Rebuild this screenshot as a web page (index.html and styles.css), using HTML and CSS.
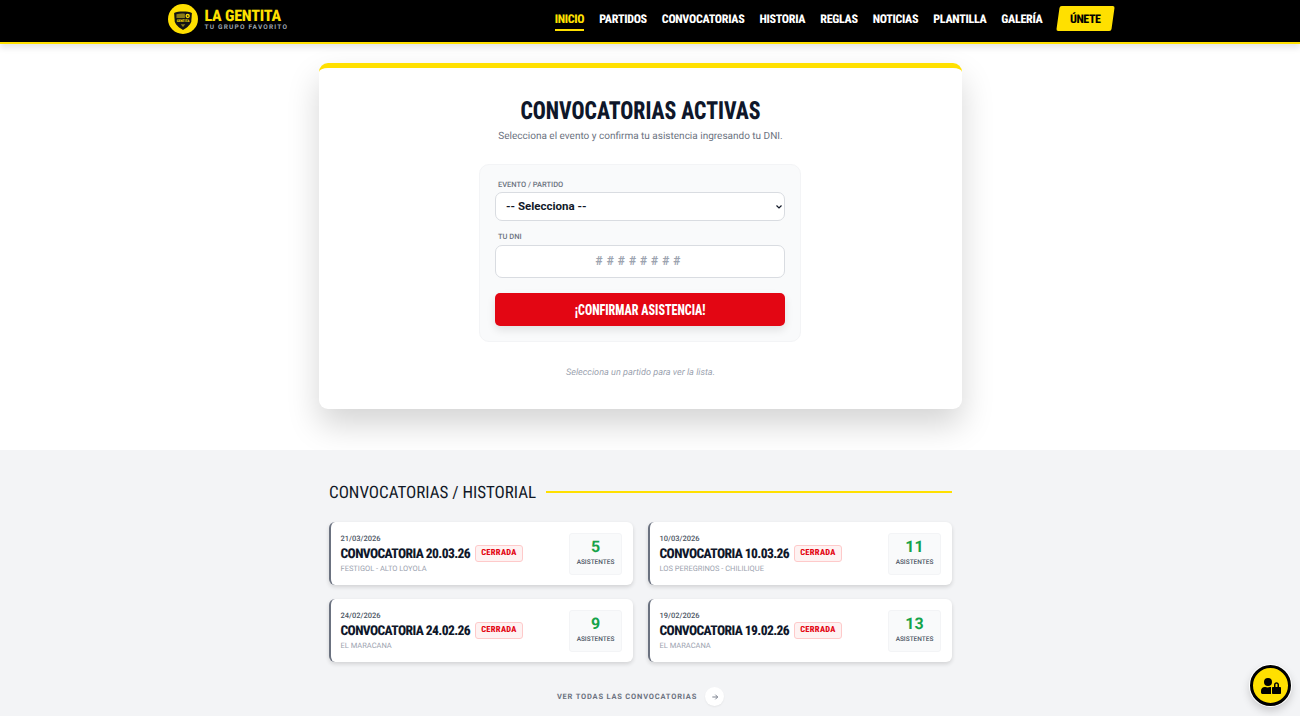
FILE: index.html
```html
<!DOCTYPE html>
<html lang="es">
<head>
    <meta charset="UTF-8">
    <meta name="viewport" content="width=device-width, initial-scale=1.0">
    <title>La Gentita</title>
    <link rel="stylesheet" href="styles.css">
</head>
<body>
    <header class="topbar">
        <div class="topbar-inner">
            <a class="brand" href="#">
                <svg class="brand-logo" viewBox="0 0 32 32" aria-hidden="true">
                    <circle cx="16" cy="16" r="16" fill="#ffe000"/>
                    <path d="M6.500 9.500 C11 7.500 21 7.500 25.500 9.500 L24.800 19 C23.500 23 19 26 16 27.800 C13 26 8.500 23 7.200 19 Z" fill="#141414"/>
                    <path d="M9 11 C12 10 15 10 18 10.300 V15 H9 Z" fill="#8a7c18"/>
                    <circle cx="21" cy="12.800" r="2.300" fill="#ffe000"/>
                    <circle cx="21" cy="12.800" r="0.900" fill="#141414"/>
                    <text class="logo-word" x="16" y="19.300" text-anchor="middle">GENTITA</text>
                    <path d="M13.500 21.500h5l-2.500 3z" fill="#8a7c18"/>
                </svg>
                <span class="brand-text">
                    <span class="brand-name">LA GENTITA</span>
                    <span class="brand-tag">TU GRUPO FAVORITO</span>
                </span>
            </a>
            <nav class="nav">
                <a class="nav-link active" href="#">INICIO</a>
                <a class="nav-link" href="#">PARTIDOS</a>
                <a class="nav-link" href="#">CONVOCATORIAS</a>
                <a class="nav-link" href="#">HISTORIA</a>
                <a class="nav-link" href="#">REGLAS</a>
                <a class="nav-link" href="#">NOTICIAS</a>
                <a class="nav-link" href="#">PLANTILLA</a>
                <a class="nav-link" href="#">GALERÍA</a>
                <a class="nav-cta" href="#"><span>ÚNETE</span></a>
            </nav>
        </div>
    </header>

    <section class="active-section">
        <div class="active-card">
            <h1>CONVOCATORIAS ACTIVAS</h1>
            <p class="lead">Selecciona el evento y confirma tu asistencia ingresando tu DNI.</p>

            <form class="rsvp-form">
                <label class="field-label" for="evento">EVENTO / PARTIDO</label>
                <select id="evento" class="field-select">
                    <option>-- Selecciona --</option>
                </select>
                <label class="field-label second" for="dni">TU DNI</label>
                <input id="dni" class="field-input" type="text" placeholder="########">
                <button class="confirm-btn" type="button"><span>¡CONFIRMAR ASISTENCIA!</span></button>
            </form>

            <p class="hint">Selecciona un partido para ver la lista.</p>
        </div>
    </section>

    <section class="history">
        <div class="history-inner">
            <div class="history-head">
                <h2>CONVOCATORIAS / HISTORIAL</h2>
                <span class="history-line"></span>
            </div>

            <div class="history-grid">
                <article class="event">
                    <div class="event-info">
                        <div class="event-date">21/03/2026</div>
                        <div class="event-title">
                            <h3>CONVOCATORIA 20.03.26</h3>
                            <span class="badge">CERRADA</span>
                        </div>
                        <div class="event-place">FESTIGOL - ALTO LOYOLA</div>
                    </div>
                    <div class="event-count"><b>5</b><span>ASISTENTES</span></div>
                </article>
                <article class="event">
                    <div class="event-info">
                        <div class="event-date">10/03/2026</div>
                        <div class="event-title">
                            <h3>CONVOCATORIA 10.03.26</h3>
                            <span class="badge">CERRADA</span>
                        </div>
                        <div class="event-place">LOS PEREGRINOS - CHILILIQUE</div>
                    </div>
                    <div class="event-count"><b>11</b><span>ASISTENTES</span></div>
                </article>
                <article class="event">
                    <div class="event-info">
                        <div class="event-date">24/02/2026</div>
                        <div class="event-title">
                            <h3>CONVOCATORIA 24.02.26</h3>
                            <span class="badge">CERRADA</span>
                        </div>
                        <div class="event-place">EL MARACANA</div>
                    </div>
                    <div class="event-count"><b>9</b><span>ASISTENTES</span></div>
                </article>
                <article class="event">
                    <div class="event-info">
                        <div class="event-date">19/02/2026</div>
                        <div class="event-title">
                            <h3>CONVOCATORIA 19.02.26</h3>
                            <span class="badge">CERRADA</span>
                        </div>
                        <div class="event-place">EL MARACANA</div>
                    </div>
                    <div class="event-count"><b>13</b><span>ASISTENTES</span></div>
                </article>
            </div>

            <a class="see-all" href="#">
                VER TODAS LAS CONVOCATORIAS
                <span class="see-all-arrow">
                    <svg viewBox="0 0 12 12" aria-hidden="true">
                        <path d="M2 6h8M6.500 2.500 10 6l-3.500 3.500" fill="none" stroke="currentColor" stroke-width="1.300"/>
                    </svg>
                </span>
            </a>
        </div>
    </section>

    <!-- acceso admin -->
    <a class="admin-fab" href="#">
        <svg viewBox="0 0 640 512" aria-hidden="true">
            <path d="M224 256a128 128 0 1 0 0-256 128 128 0 0 0 0 256zm96 64c0-10 1.500-20 4-29.500-7-1.500-14-2.500-21.500-2.500h-16.500c-22 10-47 16-74 16s-52-6-74-16h-16.500C54 288 0 342 0 408.500V464c0 26.500 21.500 48 48 48h277c-3-7-5-15-5-24V320z"/>
            <path d="M608 288h-32v-72c0-44-36-80-80-80s-80 36-80 80v72h-32c-17.700 0-32 14.300-32 32v160c0 17.700 14.300 32 32 32h224c17.700 0 32-14.300 32-32V320c0-17.700-14.300-32-32-32zm-144 0v-72c0-17.600 14.400-32 32-32s32 14.400 32 32v72h-64z"/>
        </svg>
    </a>
</body>
</html>
```

FILE: styles.css
```css
* {
    box-sizing: border-box;
}
html, body {
    height: 100%;
}
body {
    margin: 0;
    font-family: Roboto, "Liberation Sans", sans-serif;
    color: #111827;
    background-color: #fff;
    overflow: hidden;
    text-rendering: geometricPrecision;
}
a {
    text-decoration: none;
    color: inherit;
}
h1, h2, h3, p {
    margin: 0;
}

/* titulares estrechos */
.brand-name, .nav-link, .nav-cta, .active-card h1, .confirm-btn,
.history-head h2, .event-title h3, .badge {
    font-family: Roboto, "Liberation Sans", sans-serif;
    font-stretch: 75%;
}

/* barra superior */
.topbar {
    height: 44px;
    padding-right: 19px;
    background-color: #000;
    border-bottom: 2px solid #ffe000;
    box-shadow: 0 4px 6px rgba(0,0,0,0.1);
    position: relative;
}
.topbar-inner {
    width: 946px;
    height: 42px;
    margin: 0 auto;
    display: flex;
    align-items: center;
    justify-content: space-between;
}
.brand {
    display: flex;
    align-items: center;
    gap: 7px;
    padding-bottom: 4px;
}
.brand-logo {
    width: 30px;
    height: 30px;
}
.logo-word {
    font-family: Roboto, sans-serif;
    font-stretch: 75%;
    font-size: 3.8px;
    font-weight: 800;
    fill: #ffe000;
}
.brand-text {
    display: flex;
    flex-direction: column;
    margin-top: 1px;
}
.brand-name {
    font-weight: 800;
    font-size: 16px;
    line-height: 15px;
    letter-spacing: -0.2px;
    color: #ffe000;
}
.brand-tag {
    font-size: 6.5px;
    line-height: 8px;
    font-weight: 700;
    letter-spacing: 1.2px;
    color: #9ca3af;
}
.nav {
    display: flex;
    align-items: center;
    gap: 15px;
}
.nav-link {
    font-weight: 800;
    font-size: 12px;
    line-height: 14px;
    letter-spacing: -0.3px;
    color: #fff;
    padding-bottom: 3px;
    border-bottom: 2px solid transparent;
}
.nav-link.active {
    color: #ffe000;
    border-bottom-color: #ffe000;
}
.nav-cta {
    background-color: #ffe000;
    color: #000;
    width: 55px;
    height: 25px;
    margin-right: 1px;
    margin-bottom: 5px;
    border-radius: 2px;
    transform: skewX(-8deg);
    display: flex;
    align-items: center;
    justify-content: center;
    font-weight: 800;
    font-size: 12px;
    letter-spacing: -0.4px;
}
.nav-cta span {
    transform: skewX(8deg);
}

/* convocatorias activas */
.active-section {
    height: 406px;
    padding-top: 19px;
    padding-right: 19px;
}
.active-card {
    width: 643px;
    height: 346px;
    margin: 0 auto;
    padding-top: 30px;
    background-color: #fff;
    border-top: 5px solid #ffe000;
    border-radius: 9px;
    box-shadow: 0 16px 32px rgba(0,0,0,0.17);
    text-align: center;
}
.active-card h1 {
    font-weight: 800;
    font-size: 25px;
    line-height: 28px;
    transform: scaleX(0.865);
    color: #0f172a;
}
.lead {
    margin-top: 3px;
    font-size: 10px;
    line-height: 16px;
    color: #6b7280;
}
.rsvp-form {
    width: 322px;
    height: 178px;
    margin: 19px 161px 0 160px;
    padding: 15px 15px;
    background-color: #f9fafb;
    border: 1px solid #f3f4f6;
    border-radius: 10px;
    display: flex;
    flex-direction: column;
    text-align: left;
}
.field-label {
    font-size: 7.5px;
    line-height: 10px;
    font-weight: 500;
    color: #6b7280;
    padding-left: 3px;
    margin-bottom: 2px;
}
.field-label.second {
    margin-top: 11px;
    margin-bottom: 3px;
}
.field-select {
    appearance: none;
    height: 29px;
    width: 100%;
    padding: 0 10px 2px;
    background: #fff url("data:image/svg+xml,%3Csvg xmlns='http://www.w3.org/2000/svg' viewBox='0 0 6 4'%3E%3Cpath d='M.5.5 3 3 5.500.5' fill='none' stroke='%23111827' stroke-width='1.200'/%3E%3C/svg%3E") no-repeat right 2px center / 6px 4px;
    border: 1px solid #d9dce1;
    border-radius: 7px;
    font-family: Roboto, sans-serif;
    font-size: 11.5px;
    font-weight: 700;
    color: #111827;
}
.field-input {
    height: 33px;
    width: 100%;
    padding: 0 0 2px;
    background-color: #fff;
    border: 1px solid #d9dce1;
    border-radius: 7px;
    font-family: Roboto, sans-serif;
    font-size: 12px;
    font-weight: 700;
    letter-spacing: 4px;
    text-align: center;
}
.field-input::placeholder {
    color: #9ca3af;
}
.confirm-btn {
    height: 33px;
    margin-top: 15px;
    background-color: #e30613;
    color: #fff;
    border: none;
    border-radius: 5px;
    box-shadow: 0 4px 8px rgba(0,0,0,0.1);
    font-weight: 800;
    font-size: 14px;
}
.confirm-btn span {
    display: inline-block;
    transform: scaleX(0.86);
}
.hint {
    margin-top: 25px;
    font-size: 9.1px;
    line-height: 12px;
    font-style: italic;
    color: #9ca3af;
}

/* historial */
.history {
    height: 266px;
    background-color: #f3f4f6;
    padding-top: 30px;
    padding-right: 19px;
}
.history-inner {
    width: 623px;
    margin: 0 auto;
}
.history-head {
    display: flex;
    align-items: center;
    gap: 10px;
    padding-top: 1px;
}
.history-head h2 {
    font-weight: 400;
    font-size: 17px;
    line-height: 24px;
    color: #111827;
    white-space: nowrap;
}
.history-line {
    flex: 1;
    height: 2px;
    margin-bottom: 2px;
    background-color: #ffe000;
}
.history-grid {
    margin-top: 17px;
    display: grid;
    grid-template-columns: 304px 304px;
    column-gap: 15px;
    row-gap: 14px;
}
.event {
    height: 63px;
    padding: 0 11px 0 9.5px;
    background-color: #fff;
    border-left: 2px solid #6b7280;
    border-radius: 6px;
    box-shadow: 0 2px 4px rgba(0,0,0,0.14);
    display: flex;
    align-items: center;
    justify-content: space-between;
}
.event-date {
    font-size: 7.5px;
    line-height: 10px;
    font-weight: 500;
    color: #4b5563;
}
.event-title {
    display: flex;
    align-items: center;
    gap: 5px;
    height: 18px;
    margin-top: 1px;
    margin-bottom: 1px;
}
.event-title h3 {
    font-weight: 800;
    font-size: 13.5px;
    line-height: 18px;
    letter-spacing: -0.6px;
    color: #0f172a;
    white-space: nowrap;
}
.badge {
    font-weight: 800;
    font-size: 8.5px;
    line-height: 15px;
    padding: 0 5px;
    letter-spacing: 0.3px;
    color: #e30613;
    background-color: #fef2f2;
    border: 1px solid #fecaca;
    border-radius: 3px;
}
.event-place {
    font-size: 7.5px;
    line-height: 10px;
    color: #9ca3af;
}
.event-count {
    width: 53px;
    height: 42px;
    padding-top: 3px;
    background-color: #f9fafb;
    border: 1px solid #f3f4f6;
    border-radius: 3px;
    display: flex;
    flex-direction: column;
    align-items: center;
}
.event-count b {
    font-size: 16px;
    line-height: 20px;
    color: #16a34a;
}
.event-count span {
    font-size: 6.5px;
    line-height: 10px;
    font-weight: 500;
    color: #4b5563;
}
.see-all {
    margin-top: 25px;
    display: flex;
    align-items: center;
    justify-content: center;
    gap: 8px;
    font-size: 7.5px;
    font-weight: 700;
    letter-spacing: 0.8px;
    color: #6b7280;
}
.see-all-arrow {
    width: 19px;
    height: 19px;
    background-color: #fff;
    border-radius: 50%;
    box-shadow: 0 1px 2px rgba(0,0,0,0.06);
    display: flex;
    align-items: center;
    justify-content: center;
}
.see-all-arrow svg {
    width: 8px;
    height: 8px;
}

/* boton flotante */
.admin-fab {
    position: fixed;
    right: 9px;
    bottom: 10px;
    width: 41px;
    height: 41px;
    background-color: #ffe000;
    border: 3px solid #000;
    border-radius: 50%;
    box-shadow: 0 0 0 1px #fff, 0 4px 10px rgba(0,0,0,0.2);
    display: flex;
    align-items: center;
    justify-content: center;
}
.admin-fab svg {
    width: 20px;
    height: 16px;
    fill: #000;
}
```
